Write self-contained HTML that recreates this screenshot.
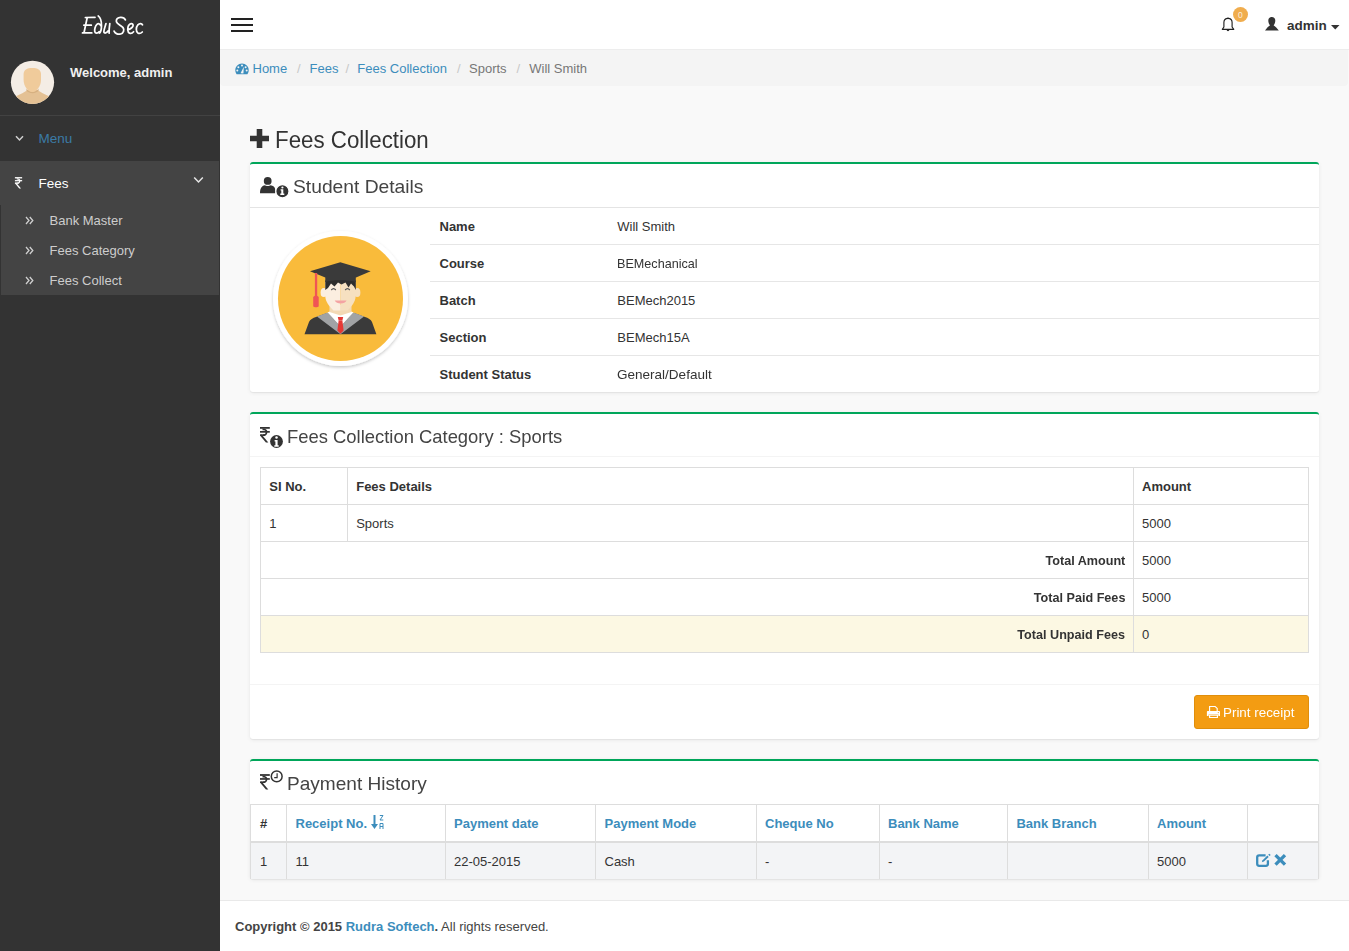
<!DOCTYPE html>
<html><head><meta charset="utf-8">
<style>
*{box-sizing:border-box;margin:0;padding:0}
html,body{width:1349px;height:951px;overflow:hidden;background:#f9f9f9;font-family:"Liberation Sans",sans-serif;color:#333;font-size:13px;position:relative}
.a{position:absolute}
.t{white-space:nowrap;position:absolute;line-height:1}
</style></head><body>
<div class="a" style="left:0px;top:0px;width:220px;height:951px;background:#333333;"></div>
<svg class="a" style="left:76px;top:10px" width="72" height="30" viewBox="76 10 72 30"><g stroke="#fff" stroke-width="1.75" fill="none" stroke-linecap="round" stroke-linejoin="round"><path d="M85.4 17.5 L95 17.3 M87.2 17.6 L84 32.8 M83.9 25.2 L91.3 25.2 M82.5 32.9 L91.8 32.9"/><path d="M98.2 15.9 C100.6 17.6 101.6 21 101.5 26 C101.4 29.8 100.7 32 99.6 33 M100.8 25.6 C99.8 23.5 98.2 23.3 96.9 24.4 C95.1 26 94.3 29.8 94.8 31.7 C95.3 33.6 97.6 33.6 99.3 31.6"/><path d="M106 23.6 C105 27 103.7 30.4 103.9 32 C104.1 33.6 106.6 33.4 108.2 30.8 M109.8 23.6 C109.3 27 108.9 30 109.1 33.2"/><path d="M125.4 19.9 C124.5 17.9 122.6 17.2 120.6 17.3 C117.6 17.4 115.9 19.4 116.4 21.8 C116.9 24 121.5 25.6 123 27.6 C124.5 29.6 123.8 33 120.6 34 C117.6 34.8 114.9 33.1 114.1 31.1"/><path d="M127.9 30 C130.2 29 133.5 27.1 133.1 24.9 C132.6 23 129.9 23.2 128.6 25.5 C127.3 28 127.3 32 129.6 33.2 C131.1 33.8 132.6 33 133.6 31.8"/><path d="M142.5 24.8 C141.8 23.2 139.5 23 137.9 24.8 C135.9 27.2 135.7 31.6 137.9 33 C139.6 34 141.3 33 142.3 32"/></g></svg>
<svg class="a" style="left:10px;top:60px" width="45" height="45" viewBox="10 60 45 45">
<defs><clipPath id="av"><circle cx="32.5" cy="82.3" r="21.6"/></clipPath></defs>
<circle cx="32.5" cy="82.3" r="21.6" fill="#f4ede5"/>
<g clip-path="url(#av)">
<path d="M5 110 L5 100.5 L16 96.2 C20 94.5 25 91.8 27.5 90 L37.5 90 C40 91.8 45 94.5 49 96.2 L60 100.5 L60 110 Z" fill="#e4c194"/>
<path d="M26.5 88.5 C29 93 36 93 38.5 88.5 L38.5 90.8 C36 94 29 94 26.5 90.8 Z" fill="#d6b080"/>
<path d="M23.6 74 C23.6 69.8 27 67.9 32.3 67.9 C37.6 67.9 41 69.8 41 74 L41 80 C41 86 36.5 92 32.3 92 C28 92 23.6 86 23.6 80 Z" fill="#f0cb9b"/>
</g></svg>
<div class="t" style="left:70px;top:66.00px;font-size:13px;color:#f0f0f0;font-weight:bold;">Welcome, admin</div>
<div class="a" style="left:0px;top:115px;width:220px;height:1px;background:#424242;"></div>
<svg class="a" style="left:15px;top:135px" width="9" height="7" viewBox="0 0 9 7"><path d="M1 1.3 L4.5 5 L8 1.3" stroke="#d0d0d0" stroke-width="1.5" fill="none"/></svg>
<div class="t" style="left:38.5px;top:131.57px;font-size:13.5px;color:#3b7ba6;">Menu</div>
<div class="a" style="left:0px;top:161px;width:219px;height:134px;background:#444444;"></div>
<div class="a" style="left:0px;top:205px;width:1px;height:90px;background:#333333;"></div>
<svg class="a" style="left:10px;top:172px" width="20" height="20" viewBox="10 172 20 20"><path d="M 14.90 177.10 H 22.15 V 178.43 H 14.90 Z" fill="#fff"/><path d="M 14.90 180.06 H 22.15 V 181.32 H 14.90 Z" fill="#fff"/><path d="M 14.90 182.50 H 18.75 V 183.69 H 14.90 Z" fill="#fff"/><path d="M 16.75 178.28 C 19.34 178.28 20.38 179.32 20.38 180.80 C 20.38 182.43 19.34 183.69 18.08 183.69 L 17.12 183.69 L 17.12 182.50 L 18.08 182.50 C 18.67 182.50 19.04 181.76 19.04 180.80 C 19.04 179.76 18.30 179.54 16.75 179.54 Z" fill="#fff"/><path d="M 14.90 183.32 L 16.08 182.58 L 21.04 188.57 L 19.27 188.57 Z" fill="#fff"/></svg>
<div class="t" style="left:38.5px;top:176.87px;font-size:13.5px;color:#ffffff;">Fees</div>
<svg class="a" style="left:193px;top:176px" width="11" height="8" viewBox="0 0 11 8"><path d="M1.2 1.5 L5.5 6 L9.8 1.5" stroke="#e6e6e6" stroke-width="1.5" fill="none"/></svg>
<svg class="a" style="left:25px;top:216px" width="9" height="9" viewBox="0 0 9 9"><path d="M1 1 L4 4.5 L1 8 M4.8 1 L7.8 4.5 L4.8 8" stroke="#cfcfcf" stroke-width="1.3" fill="none"/></svg>
<div class="t" style="left:49.5px;top:214.40px;font-size:13px;color:#cdcdcd;">Bank Master</div>
<svg class="a" style="left:25px;top:246px" width="9" height="9" viewBox="0 0 9 9"><path d="M1 1 L4 4.5 L1 8 M4.8 1 L7.8 4.5 L4.8 8" stroke="#cfcfcf" stroke-width="1.3" fill="none"/></svg>
<div class="t" style="left:49.5px;top:244.40px;font-size:13px;color:#cdcdcd;">Fees Category</div>
<svg class="a" style="left:25px;top:276px" width="9" height="9" viewBox="0 0 9 9"><path d="M1 1 L4 4.5 L1 8 M4.8 1 L7.8 4.5 L4.8 8" stroke="#cfcfcf" stroke-width="1.3" fill="none"/></svg>
<div class="t" style="left:49.5px;top:274.40px;font-size:13px;color:#cdcdcd;">Fees Collect</div>
<div class="a" style="left:220px;top:0px;width:1129px;height:50px;background:#ffffff;"></div>
<div class="a" style="left:220px;top:49px;width:1129px;height:1px;background:#ededed;"></div>
<div class="a" style="left:231px;top:18px;width:22px;height:2px;background:#222;"></div>
<div class="a" style="left:231px;top:24px;width:22px;height:2px;background:#222;"></div>
<div class="a" style="left:231px;top:30px;width:22px;height:2px;background:#222;"></div>
<svg class="a" style="left:1220px;top:16px" width="16" height="18" viewBox="1220 16 16 18"><path d="M1222.3 29.3 L1223.9 27 L1223.9 22.6 C1223.9 20 1225.5 18.4 1228 18.4 C1230.5 18.4 1232.1 20 1232.1 22.6 L1232.1 27 L1233.8 29.3 Z" stroke="#222" stroke-width="1.15" fill="none" stroke-linejoin="round"/><path d="M1226.6 29.6 C1226.8 31.8 1229.2 31.8 1229.4 29.6 Z" fill="#222"/><circle cx="1228" cy="18.2" r="0.8" fill="#222"/></svg>
<div class="a" style="left:1233px;top:7px;width:15px;height:15px;background:#f0ad4e;border-radius:50%"></div>
<div class="t" style="left:1237.9px;top:11.00px;font-size:8.5px;color:#fbeede;">0</div>
<svg class="a" style="left:1264px;top:16px" width="16" height="16" viewBox="1264 16 16 16"><path d="M1265 30.6 L1267.6 27.2 C1268.3 26.5 1269.4 26.1 1270 25.3 C1268.8 24.1 1268.3 22.5 1268.3 20.6 C1268.3 18.3 1269.7 17 1271.8 17 C1273.9 17 1275.3 18.3 1275.3 20.6 C1275.3 22.5 1274.8 24.1 1273.6 25.3 C1274.2 26.1 1275.3 26.5 1276 27.2 L1278.8 30.6 Z" fill="#333"/></svg>
<div class="t" style="left:1287px;top:18.57px;font-size:13.5px;color:#333;font-weight:bold;">admin</div>
<svg class="a" style="left:1331px;top:25px" width="9" height="5" viewBox="0 0 9 5"><path d="M0 0 L8.5 0 L4.25 4.5 Z" fill="#333"/></svg>
<div class="a" style="left:220px;top:50px;width:1128px;height:36px;background:#f4f4f4;border-radius:0 0 4px 4px"></div>
<svg class="a" style="left:235px;top:63px" width="14" height="12" viewBox="0 0 14 12"><path d="M7 0.5 C3.2 0.5 0.3 3.5 0.3 7 C0.3 8.6 0.8 10 1.6 11.3 L12.4 11.3 C13.2 10 13.7 8.6 13.7 7 C13.7 3.5 10.8 0.5 7 0.5 Z" fill="#3c8dbc"/><circle cx="7" cy="2.6" r="1" fill="#f4f4f4"/><circle cx="3.4" cy="4.2" r="1" fill="#f4f4f4"/><circle cx="10.6" cy="4.2" r="1" fill="#f4f4f4"/><circle cx="2.3" cy="7.6" r="1" fill="#f4f4f4"/><circle cx="11.7" cy="7.6" r="1" fill="#f4f4f4"/><path d="M5.6 10.2 L8.8 3.8 L8.4 10.4 Z" fill="#f4f4f4"/></svg>
<div class="t" style="left:252.5px;top:62.20px;font-size:13px;color:#3c8dbc;">Home</div>
<div class="t" style="left:297px;top:62.20px;font-size:13px;color:#c8c8c8;">/</div>
<div class="t" style="left:309.5px;top:62.20px;font-size:13px;color:#3c8dbc;">Fees</div>
<div class="t" style="left:345.5px;top:62.20px;font-size:13px;color:#c8c8c8;">/</div>
<div class="t" style="left:357.3px;top:62.20px;font-size:13px;color:#3c8dbc;">Fees Collection</div>
<div class="t" style="left:457px;top:62.20px;font-size:13px;color:#c8c8c8;">/</div>
<div class="t" style="left:469px;top:62.20px;font-size:13px;color:#777;">Sports</div>
<div class="t" style="left:516.5px;top:62.20px;font-size:13px;color:#c8c8c8;">/</div>
<div class="t" style="left:529.3px;top:62.20px;font-size:13px;color:#777;">Will Smith</div>
<svg class="a" style="left:250px;top:129px" width="19" height="19" viewBox="0 0 19 19"><path d="M6.7 0 H12.3 V6.7 H19 V12.3 H12.3 V19 H6.7 V12.3 H0 V6.7 H6.7 Z" fill="#333"/></svg>
<div class="t" style="left:274.5px;top:129.13px;font-size:23px;color:#333;transform:scaleX(0.97);transform-origin:0 0;">Fees Collection</div>
<div class="a" style="left:250px;top:162px;width:1069px;height:230px;background:#fff;border-top:2px solid #00a65a;border-radius:3px;box-shadow:0 1px 1px rgba(0,0,0,0.05),0 1px 4px rgba(0,0,0,0.07)"></div>
<div class="a" style="left:250px;top:207px;width:1069px;height:1px;background:#e4e4e4;"></div>
<svg class="a" style="left:260px;top:177px" width="30" height="22" viewBox="0 0 30 22"><circle cx="7.7" cy="3.9" r="3.9" fill="#333"/><path d="M0 16.2 C0 10.5 2.5 8.6 4.8 8.3 C6 9.3 9.4 9.3 10.6 8.3 C13 8.6 15 10 15.2 12.2 L15.2 16.2 Z" fill="#333"/><circle cx="22.4" cy="14.3" r="6.6" fill="#333" stroke="#fff" stroke-width="1.2"/><path d="M20.6 12.2 H23.3 V16.6 H24.3 V18 H20.3 V16.6 H21.3 V13.6 H20.6 Z" fill="#fff"/><circle cx="22.4" cy="10.5" r="1.1" fill="#fff"/></svg>
<div class="t" style="left:293px;top:177.54px;font-size:18.5px;color:#444;transform:scaleX(1.04);transform-origin:0 0;">Student Details</div>
<svg class="a" style="left:256px;top:214px" width="170" height="170" viewBox="256 214 170 170">
<defs><filter id="sh" x="-20%" y="-20%" width="140%" height="140%"><feDropShadow dx="0" dy="1.5" stdDeviation="1.8" flood-color="#000" flood-opacity="0.22"/></filter></defs>
<circle cx="340.5" cy="298.5" r="67.5" fill="#fff" filter="url(#sh)"/>
<circle cx="340.5" cy="298.5" r="62.5" fill="#f9bb3b"/>
<path d="M304.5 334.2 L309 322 C310 319.5 313 318 316 317 L327 313 L354 313 L365 317 C368 318 371 319.5 372 322 L376.4 334.2 Z" fill="#3a3a3a"/>
<path d="M317 316.6 L340.5 334.2 L364 316.6 L353.5 312.6 L340.5 326.5 L327.5 312.6 Z" fill="#a1a3a5"/>
<path d="M327.5 312.6 L340.5 326.5 L353.5 312.6 L349 310.5 L332 310.5 Z" fill="#ffffff"/>
<path d="M329.5 305 L351.5 305 L351.5 312 L340.5 315.5 L329.5 312 Z" fill="#f3d9b5"/>
<path d="M337.8 317 L343.2 317 L342.4 320.5 L338.6 320.5 Z" fill="#e53935"/>
<path d="M338.6 320.5 L342.4 320.5 L343.6 330.5 L340.5 333.8 L337.4 330.5 Z" fill="#e53935"/>
<ellipse cx="323.8" cy="292.5" rx="3.2" ry="4.6" fill="#fbeee0"/><ellipse cx="357.2" cy="292.5" rx="3.2" ry="4.6" fill="#f6e0c0"/>
<path d="M325.3 282 L340.5 282 L340.5 310.6 L333.5 310.6 C329.5 306.5 325.3 301.5 325.3 296.5 Z" fill="#fbeee0"/>
<path d="M340.5 282 L355.6 282 L355.6 296.5 C355.6 301.5 351.5 306.5 347.5 310.6 L340.5 310.6 Z" fill="#f6e0c0"/>
<path d="M325.3 290 L325.3 281 C326 279 330 278 340.5 278 C351 278 355 279 355.8 281 L355.8 290 L354 286.5 L351 283.5 L348.5 287.5 L345.5 282.5 L341.5 284.5 L338 282.5 L334.5 286.5 L331 283.5 L328 288 Z" fill="#2e2e2e"/>
<path d="M325.3 270 L355.8 270 L355.8 282 C350 279.5 331 279.5 325.3 282 Z" fill="#3a3a3a"/>
<path d="M310 271.3 L340.3 262.3 L370.7 271.3 L356 277.5 L325.3 277.5 Z" fill="#3a3a3a"/>
<rect x="314.9" y="273" width="2.3" height="24" fill="#f05555"/>
<path d="M313.2 297.5 C313.2 295.3 318.7 295.3 318.7 297.5 L318.7 306.3 C318 307.6 314 307.6 313.2 306.3 Z" fill="#f05555"/>
<path d="M331.3 290 Q333.5 287.3 335.8 290 M345.2 290 Q347.5 287.3 349.8 290" stroke="#555" stroke-width="1.2" fill="none"/>
<path d="M334.7 300.6 L346.6 300.6 C345 304.6 336.3 304.6 334.7 300.6 Z" fill="#f4a3a3"/>
</svg>
<div class="t" style="left:439.5px;top:220.00px;font-size:13px;color:#333;font-weight:bold;">Name</div>
<div class="t" style="left:617.3px;top:220.00px;font-size:13px;color:#333;">Will Smith</div>
<div class="t" style="left:439.5px;top:257.00px;font-size:13px;color:#333;font-weight:bold;">Course</div>
<div class="t" style="left:617.3px;top:257.00px;font-size:13px;color:#333;transform:scaleX(0.97);transform-origin:0 0;">BEMechanical</div>
<div class="a" style="left:430px;top:244px;width:889px;height:1px;background:#e6e6e6;"></div>
<div class="t" style="left:439.5px;top:294.00px;font-size:13px;color:#333;font-weight:bold;">Batch</div>
<div class="t" style="left:617.3px;top:294.00px;font-size:13px;color:#333;">BEMech2015</div>
<div class="a" style="left:430px;top:281px;width:889px;height:1px;background:#e6e6e6;"></div>
<div class="t" style="left:439.5px;top:331.00px;font-size:13px;color:#333;font-weight:bold;">Section</div>
<div class="t" style="left:617.3px;top:331.00px;font-size:13px;color:#333;">BEMech15A</div>
<div class="a" style="left:430px;top:318px;width:889px;height:1px;background:#e6e6e6;"></div>
<div class="t" style="left:439.5px;top:368.00px;font-size:13px;color:#333;font-weight:bold;">Student Status</div>
<div class="t" style="left:617.3px;top:368.00px;font-size:13px;color:#333;transform:scaleX(1.04);transform-origin:0 0;">General/Default</div>
<div class="a" style="left:430px;top:355px;width:889px;height:1px;background:#e6e6e6;"></div>
<div class="a" style="left:250px;top:412px;width:1069px;height:327px;background:#fff;border-top:2px solid #00a65a;border-radius:3px;box-shadow:0 1px 1px rgba(0,0,0,0.05),0 1px 4px rgba(0,0,0,0.07)"></div>
<div class="a" style="left:250px;top:456px;width:1069px;height:1px;background:#f4f4f4;"></div>
<svg class="a" style="left:255px;top:422px" width="32" height="30" viewBox="255 422 32 30"><path d="M 260.00 427.00 H 269.80 V 428.80 H 260.00 Z" fill="#333"/><path d="M 260.00 431.00 H 269.80 V 432.70 H 260.00 Z" fill="#333"/><path d="M 260.00 434.30 H 265.20 V 435.90 H 260.00 Z" fill="#333"/><path d="M 262.50 428.60 C 266.00 428.60 267.40 430.00 267.40 432.00 C 267.40 434.20 266.00 435.90 264.30 435.90 L 263.00 435.90 L 263.00 434.30 L 264.30 434.30 C 265.10 434.30 265.60 433.30 265.60 432.00 C 265.60 430.60 264.60 430.30 262.50 430.30 Z" fill="#333"/><path d="M 260.00 435.40 L 261.60 434.40 L 268.30 442.50 L 265.90 442.50 Z" fill="#333"/><circle cx="276.5" cy="441.5" r="6.4" fill="#333"/><circle cx="276.5" cy="437.5" r="1.25" fill="#fff"/><path d="M274.6 440 H277.6 V445.3 H278.7 V446.8 H274.3 V445.3 H275.4 V441.5 H274.6 Z" fill="#fff"/></svg>
<div class="t" style="left:287px;top:427.84px;font-size:18.5px;color:#444;transform:scaleX(0.995);transform-origin:0 0;">Fees Collection Category : Sports</div>
<div class="a" style="left:260px;top:467px;width:1049px;height:186px;background:#ffffff;border:1px solid #dddddd"></div>
<div class="a" style="left:261px;top:616px;width:1047px;height:36px;background:#fcf8e3;"></div>
<div class="a" style="left:260px;top:504px;width:1049px;height:1px;background:#dddddd;"></div>
<div class="a" style="left:260px;top:541px;width:1049px;height:1px;background:#dddddd;"></div>
<div class="a" style="left:260px;top:578px;width:1049px;height:1px;background:#dddddd;"></div>
<div class="a" style="left:260px;top:615px;width:1049px;height:1px;background:#dddddd;"></div>
<div class="a" style="left:347px;top:467px;width:1px;height:74px;background:#dddddd;"></div>
<div class="a" style="left:1133px;top:467px;width:1px;height:186px;background:#dddddd;"></div>
<div class="t" style="left:269.3px;top:480.00px;font-size:13px;color:#333;font-weight:bold;">SI No.</div>
<div class="t" style="left:356.2px;top:480.00px;font-size:13px;color:#333;font-weight:bold;">Fees Details</div>
<div class="t" style="left:1142px;top:480.00px;font-size:13px;color:#333;font-weight:bold;">Amount</div>
<div class="t" style="left:269.3px;top:517.00px;font-size:13px;color:#333;">1</div>
<div class="t" style="left:356.2px;top:517.00px;font-size:13px;color:#333;">Sports</div>
<div class="t" style="left:1142px;top:517.00px;font-size:13px;color:#333;">5000</div>
<div class="t" style="right:224px;top:554.00px;font-size:13px;font-weight:bold;color:#333;transform:scaleX(0.97);transform-origin:100% 0">Total Amount</div>
<div class="t" style="left:1142px;top:554.00px;font-size:13px;color:#333;">5000</div>
<div class="t" style="right:224px;top:591.00px;font-size:13px;font-weight:bold;color:#333;transform:scaleX(0.97);transform-origin:100% 0">Total Paid Fees</div>
<div class="t" style="left:1142px;top:591.00px;font-size:13px;color:#333;">5000</div>
<div class="t" style="right:224px;top:628.00px;font-size:13px;font-weight:bold;color:#333;transform:scaleX(0.97);transform-origin:100% 0">Total Unpaid Fees</div>
<div class="t" style="left:1142px;top:628.00px;font-size:13px;color:#333;">0</div>
<div class="a" style="left:250px;top:684px;width:1069px;height:1px;background:#f4f4f4;"></div>
<div class="a" style="left:1194px;top:695px;width:115px;height:34px;background:#f39c12;border:1px solid #e08e0b;border-radius:3px"></div>
<svg class="a" style="left:1205px;top:704px" width="17" height="16" viewBox="1205 704 17 16"><path d="M1209.6 711.3 V706.5 H1215.2 L1217.2 708.4 V711.3" stroke="#fff" stroke-width="1.15" fill="none"/><path d="M1206.9 712 C1206.9 711.4 1207.3 711 1207.9 711 H1219 C1219.6 711 1220 711.4 1220 712 V716.1 H1218.4 V714.6 H1208.6 V716.1 H1206.9 Z" fill="#fff"/><circle cx="1218.3" cy="712.6" r="0.6" fill="#f39c12"/><path d="M1209.6 715.2 H1217.4 V717.5 H1209.6 Z" stroke="#fff" stroke-width="1.15" fill="none"/></svg>
<div class="t" style="left:1223px;top:706.00px;font-size:13px;color:#ffffff;transform:scaleX(1.03);transform-origin:0 0;">Print receipt</div>
<div class="a" style="left:250px;top:759px;width:1069px;height:120px;background:#fff;border-top:2px solid #00a65a;border-radius:3px;box-shadow:0 1px 1px rgba(0,0,0,0.05),0 1px 4px rgba(0,0,0,0.07)"></div>
<svg class="a" style="left:255px;top:765px" width="32" height="30" viewBox="255 765 32 30"><path d="M 260.00 774.10 H 269.80 V 775.90 H 260.00 Z" fill="#333"/><path d="M 260.00 778.10 H 269.80 V 779.80 H 260.00 Z" fill="#333"/><path d="M 260.00 781.40 H 265.20 V 783.00 H 260.00 Z" fill="#333"/><path d="M 262.50 775.70 C 266.00 775.70 267.40 777.10 267.40 779.10 C 267.40 781.30 266.00 783.00 264.30 783.00 L 263.00 783.00 L 263.00 781.40 L 264.30 781.40 C 265.10 781.40 265.60 780.40 265.60 779.10 C 265.60 777.70 264.60 777.40 262.50 777.40 Z" fill="#333"/><path d="M 260.00 782.50 L 261.60 781.50 L 268.30 789.60 L 265.90 789.60 Z" fill="#333"/><circle cx="276.7" cy="776.4" r="5.4" fill="#fff" stroke="#333" stroke-width="1.5"/><path d="M277.1 773.2 V777.6 H274.2" stroke="#333" stroke-width="1.2" fill="none"/></svg>
<div class="t" style="left:287.3px;top:774.64px;font-size:18.5px;color:#444;transform:scaleX(1.03);transform-origin:0 0;">Payment History</div>
<div class="a" style="left:250px;top:804px;width:1069px;height:1px;background:#dddddd;"></div>
<div class="a" style="left:250px;top:842px;width:1069px;height:37px;background:#f3f4f6;"></div>
<div class="a" style="left:250px;top:841px;width:1069px;height:2px;background:#dddddd;"></div>
<div class="a" style="left:250px;top:804px;width:1px;height:75px;background:#dddddd;"></div>
<div class="a" style="left:1318px;top:804px;width:1px;height:75px;background:#dddddd;"></div>
<div class="a" style="left:286px;top:804px;width:1px;height:75px;background:#dddddd;"></div>
<div class="a" style="left:445px;top:804px;width:1px;height:75px;background:#dddddd;"></div>
<div class="a" style="left:595px;top:804px;width:1px;height:75px;background:#dddddd;"></div>
<div class="a" style="left:756px;top:804px;width:1px;height:75px;background:#dddddd;"></div>
<div class="a" style="left:879px;top:804px;width:1px;height:75px;background:#dddddd;"></div>
<div class="a" style="left:1007px;top:804px;width:1px;height:75px;background:#dddddd;"></div>
<div class="a" style="left:1148px;top:804px;width:1px;height:75px;background:#dddddd;"></div>
<div class="a" style="left:1247px;top:804px;width:1px;height:75px;background:#dddddd;"></div>
<div class="t" style="left:259.9px;top:817.00px;font-size:13px;color:#333;font-weight:bold;">#</div>
<div class="t" style="left:295.5px;top:817.00px;font-size:13px;color:#3c8dbc;font-weight:bold;">Receipt No.</div>
<div class="t" style="left:454px;top:817.00px;font-size:13px;color:#3c8dbc;font-weight:bold;">Payment date</div>
<div class="t" style="left:604.5px;top:817.00px;font-size:13px;color:#3c8dbc;font-weight:bold;">Payment Mode</div>
<div class="t" style="left:765px;top:817.00px;font-size:13px;color:#3c8dbc;font-weight:bold;">Cheque No</div>
<div class="t" style="left:888px;top:817.00px;font-size:13px;color:#3c8dbc;font-weight:bold;">Bank Name</div>
<div class="t" style="left:1016.4px;top:817.00px;font-size:13px;color:#3c8dbc;font-weight:bold;">Bank Branch</div>
<div class="t" style="left:1157px;top:817.00px;font-size:13px;color:#3c8dbc;font-weight:bold;">Amount</div>
<svg class="a" style="left:371px;top:814px" width="14" height="16" viewBox="0 0 14 16"><path d="M3.5 1 V12" stroke="#3c8dbc" stroke-width="2"/><path d="M0 10 L3.5 15 L7 10 Z" fill="#3c8dbc"/><path d="M8.8 1.5 H12 L9 6 H12.3" stroke="#3c8dbc" stroke-width="1" fill="none"/><path d="M9 15 V9.5 H12 V15 M9 12.5 H12" stroke="#3c8dbc" stroke-width="1" fill="none"/></svg>
<div class="t" style="left:259.9px;top:855.00px;font-size:13px;color:#333;">1</div>
<div class="t" style="left:295.5px;top:855.00px;font-size:13px;color:#333;">11</div>
<div class="t" style="left:454px;top:855.00px;font-size:13px;color:#333;">22-05-2015</div>
<div class="t" style="left:604.5px;top:855.00px;font-size:13px;color:#333;">Cash</div>
<div class="t" style="left:765px;top:855.00px;font-size:13px;color:#333;">-</div>
<div class="t" style="left:888px;top:855.00px;font-size:13px;color:#333;">-</div>
<div class="t" style="left:1157px;top:855.00px;font-size:13px;color:#333;">5000</div>
<svg class="a" style="left:1254px;top:852px" width="35" height="17" viewBox="1254 852 35 17"><path d="M1265.6 855.3 H1259.2 C1257.9 855.3 1257.2 856 1257.2 857.3 V863.8 C1257.2 865.1 1257.9 865.8 1259.2 865.8 H1265.9 C1267.2 865.8 1267.9 865.1 1267.9 863.8 V860.2" stroke="#3c8dbc" stroke-width="2.3" fill="none"/><path d="M1261.8 862.3 L1262.6 860.2 L1267.4 855.6 L1268.7 856.9 L1263.9 861.5 Z" fill="#3c8dbc"/><path d="M1268.2 854.8 L1269.3 853.8 L1270.7 855.1 L1269.6 856.1 Z" fill="#3c8dbc"/><path d="M1275.5 855.2 L1285 864.6 M1285 855.2 L1275.5 864.6" stroke="#3c8dbc" stroke-width="3.3"/></svg>
<div class="a" style="left:220px;top:900px;width:1129px;height:51px;background:#ffffff;border-top:1px solid #e9e9e9"></div>
<div class="t" style="left:235px;top:920.00px;font-size:13px;color:#444;"><b>Copyright &copy; 2015 <span style="color:#3c8dbc">Rudra Softech</span>.</b> All rights reserved.</div>
</body></html>
